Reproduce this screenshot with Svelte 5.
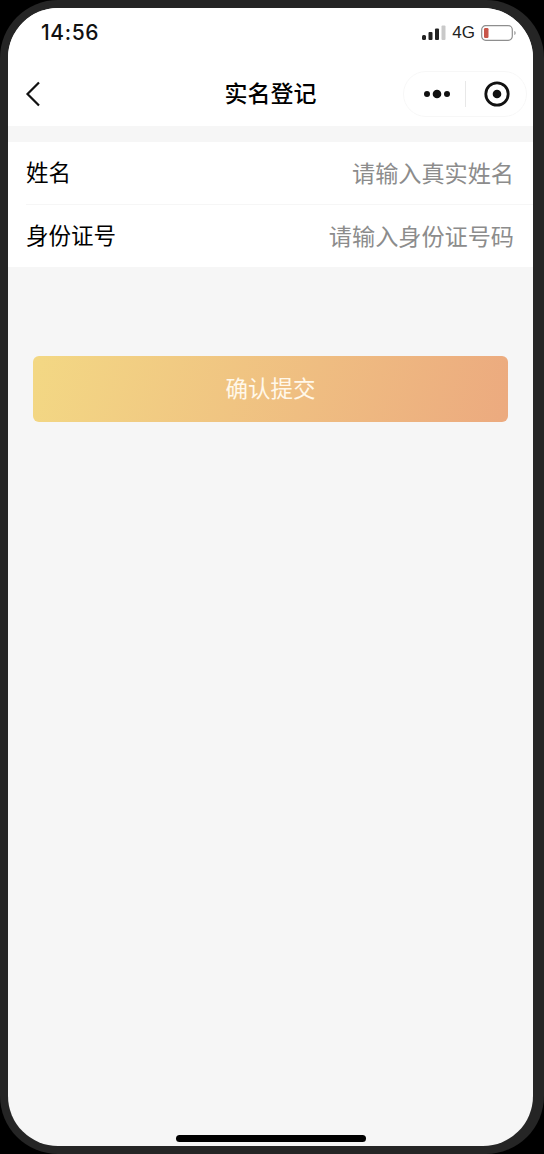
<script>
  let name = $state('')
  let idNumber = $state('')
</script>

<div class="phone">
  <div class="screen">
    <div class="status-bar">
      <span class="time">14:56</span>
      <div class="status-right">
        <svg class="signal" width="24" height="16" viewBox="0 0 24 16">
          <rect x="0" y="10" width="4" height="5" rx="1.5" fill="#222" />
          <rect x="6.5" y="7" width="4" height="8" rx="1" fill="#222" />
          <rect x="13" y="3.5" width="4" height="11.5" rx="1" fill="#222" />
          <rect x="19.5" y="0.5" width="4" height="14.5" rx="1" fill="#c9c9c9" />
        </svg>
        <span class="net">4G</span>
        <svg width="35" height="16" viewBox="0 0 35 16">
          <rect x="0.7" y="0.7" width="30.6" height="14.6" rx="4" fill="none" stroke="#8e8e8e" stroke-width="1.2" />
          <rect x="3" y="3" width="4.5" height="10" rx="1.2" fill="#c8564a" />
          <path d="M33.4 6v4c.8-.3 1.2-1 1.2-2s-.4-1.700-1.200-2z" fill="#8e8e8e" />
        </svg>
      </div>
    </div>

    <header class="nav">
      <button class="back" type="button" aria-label="返回">
        <svg width="16" height="26" viewBox="0 0 16 26" fill="none" stroke="#111" stroke-width="2.200">
          <path d="M14 1.500 2.500 13 14 24.500" />
        </svg>
      </button>
      <h1>实名登记</h1>
      <div class="capsule">
        <button type="button" aria-label="更多">
          <svg width="30" height="12" viewBox="0 0 30 12" fill="#111">
            <circle cx="5" cy="6" r="3" />
            <circle cx="15" cy="6" r="4.300" />
            <circle cx="25" cy="6" r="3" />
          </svg>
        </button>
        <span class="divider"></span>
        <button type="button" aria-label="关闭">
          <svg width="26" height="26" viewBox="0 0 26 26">
            <circle cx="13" cy="13" r="11.200" fill="none" stroke="#111" stroke-width="2.800" />
            <circle cx="13" cy="13" r="4.300" fill="#111" />
          </svg>
        </button>
      </div>
    </header>

    <form class="form">
      <label class="row">
        <span>姓名</span>
        <input bind:value={name} placeholder="请输入真实姓名" />
      </label>
      <label class="row">
        <span>身份证号</span>
        <input bind:value={idNumber} placeholder="请输入身份证号码" />
      </label>
    </form>

    <button class="submit" type="button">确认提交</button>

    <div class="home-indicator"></div>
  </div>
</div>

<style>
  :global(body) {
    margin: 0;
    background: #000;
  }
  .phone {
    box-sizing: border-box;
    width: 544px;
    height: 1154px;
    padding: 8px 11px 8px 8px;
    background: #252525;
    border-radius: 58px;
    font-family: "Noto Sans CJK SC", "Noto Sans", sans-serif;
  }
  .screen {
    display: flex;
    flex-direction: column;
    height: 100%;
    background: #f6f6f6;
    border-radius: 50px;
    overflow: hidden;
  }
  .status-bar {
    display: flex;
    justify-content: space-between;
    align-items: center;
    height: 49px;
    padding: 0 17px 0 33px;
    background: #fff;
    color: #111;
  }
  .time {
    font-family: Inter, Roboto, sans-serif;
    font-size: 21px;
    font-weight: 500;
    letter-spacing: 0.6px;
  }
  .status-right {
    display: flex;
    align-items: center;
    gap: 6px;
    padding-top: 1px;
  }
  .net {
    font-family: "Liberation Sans", sans-serif;
    font-size: 17px;
    color: #222;
  }
  .nav {
    display: grid;
    grid-template-columns: 1fr auto 1fr;
    align-items: center;
    height: 69px;
    padding: 5px 6px 0;
    box-sizing: border-box;
    background: #fff;
  }
  .nav button {
    border: 0;
    padding: 0;
    background: none;
    display: flex;
    align-items: center;
    justify-content: center;
  }
  .nav .back {
    justify-self: start;
    margin-left: 11px;
  }
  h1 {
    margin: 0 0 5px;
    font-size: 23px;
    font-weight: 500;
    color: #000;
  }
  .capsule {
    justify-self: end;
    display: flex;
    align-items: center;
    justify-content: space-between;
    box-sizing: border-box;
    width: 124px;
    height: 46px;
    padding: 0 16px 0 18px;
    border: 1px solid #f7f7f7;
    border-radius: 23px;
  }
  .divider {
    width: 1px;
    height: 26px;
    margin-right: 6px;
    background: #e8e8e8;
  }
  .form {
    margin-top: 16px;
    background: #fff;
  }
  .row {
    display: flex;
    align-items: center;
    justify-content: space-between;
    height: 62px;
    margin-left: 18px;
    font-size: 22.500px;
    color: #000;
  }
  .row + .row {
    border-top: 1px solid #f6f6f6;
  }
  .row span {
    padding-bottom: 5px;
  }
  .row input {
    flex: 1;
    min-width: 0;
    margin-right: 19px;
    border: 0;
    outline: 0;
    padding: 0 0 2px;
    background: none;
    text-align: right;
    font: inherit;
    font-size: 23.150px;
  }
  .row input::placeholder {
    color: #8c8c8c;
    opacity: 1;
  }
  .submit {
    flex: none;
    height: 66px;
    margin: 89px 25px 0 25px;
    padding: 0 0 5px;
    border: 0;
    border-radius: 6px;
    background: linear-gradient(105deg, #f3d884, #ecaa7f);
    color: #fff8ea;
    font: inherit;
    font-size: 22.500px;
  }
  .home-indicator {
    flex: none;
    width: 190px;
    height: 7px;
    margin: auto 0 4px 168px;
    border-radius: 4px;
    background: #000;
  }
</style>
